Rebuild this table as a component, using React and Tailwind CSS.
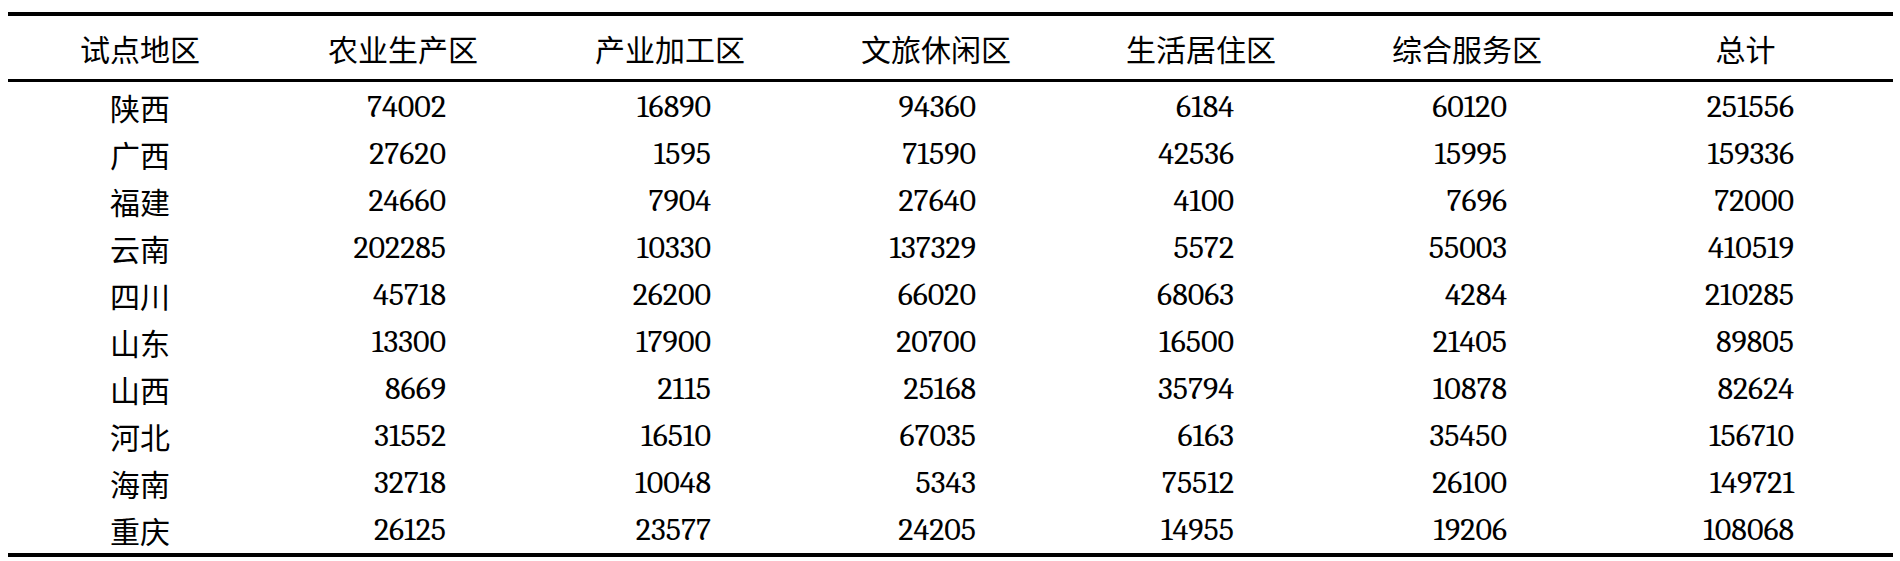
import React from "react";

const headers = ["试点地区", "农业生产区", "产业加工区", "文旅休闲区", "生活居住区", "综合服务区", "总计"];

const rows = [
  ["陕西", "74002", "16890", "94360", "6184", "60120", "251556"],
  ["广西", "27620", "1595", "71590", "42536", "15995", "159336"],
  ["福建", "24660", "7904", "27640", "4100", "7696", "72000"],
  ["云南", "202285", "10330", "137329", "5572", "55003", "410519"],
  ["四川", "45718", "26200", "66020", "68063", "4284", "210285"],
  ["山东", "13300", "17900", "20700", "16500", "21405", "89805"],
  ["山西", "8669", "2115", "25168", "35794", "10878", "82624"],
  ["河北", "31552", "16510", "67035", "6163", "35450", "156710"],
  ["海南", "32718", "10048", "5343", "75512", "26100", "149721"],
  ["重庆", "26125", "23577", "24205", "14955", "19206", "108068"],
];

const numPad = ["pr-[88px]", "pr-[95px]", "pr-[90px]", "pr-[102px]", "pr-[91px]", "pr-[99px]"];

const gridCols = "grid grid-cols-[264px_262px_272px_260px_270px_262px_1fr]";

export default function App() {
  return (
    <div className="w-[1900px] h-[561px] bg-white text-black pt-[12px] pl-[8px]">
      <div className="w-[1885px]">
        <div className="h-[4px] bg-black" />
        <div className={`${gridCols} h-[63px] items-center`}>
          {headers.map((h) => (
            <div key={h} className="font-['Noto_Sans_CJK_SC'] text-[30px] leading-none text-center">
              {h}
            </div>
          ))}
        </div>
        <div className="h-[3px] bg-black" />
        <div className="pt-[1px]">
          {rows.map((r) => (
            <div key={r[0]} className={`${gridCols} h-[47px] items-center`}>
              <div className="font-['Noto_Sans_CJK_SC'] text-[30px] leading-none text-center">{r[0]}</div>
              {r.slice(1).map((v, i) => (
                <div key={i} className={`font-serif text-[32px] leading-none text-right ${numPad[i]}`}>
                  {v}
                </div>
              ))}
            </div>
          ))}
        </div>
        <div className="h-[4px] bg-black" />
      </div>
    </div>
  );
}
